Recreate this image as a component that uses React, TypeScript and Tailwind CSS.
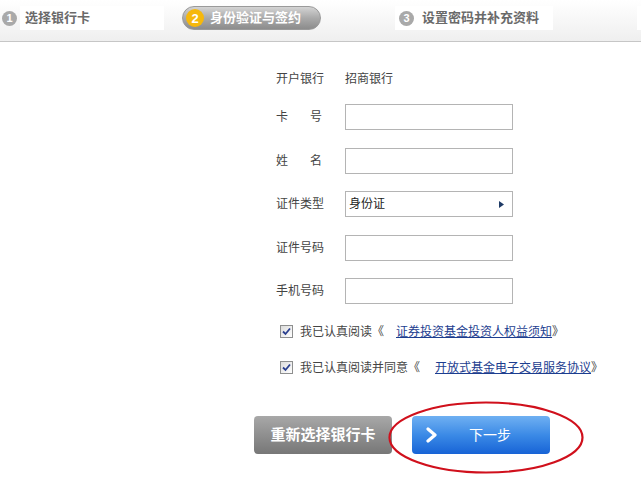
import React from 'react';

const font = { fontFamily: '"Liberation Sans", "Noto Sans CJK SC", sans-serif' };

function Step({ n, label, active }: { n: number; label: string; active?: boolean }) {
  if (active) {
    return (
      <div className="flex h-[24px] w-[139px] items-center rounded-full border border-[#9a9a9a] bg-gradient-to-b from-[#d4d4d4] via-[#aaaaaa] to-[#8c8c8c] pl-[3px]">
        <span className="flex h-[18px] w-[18px] items-center justify-center rounded-full bg-[#f6b80c] text-[13px] font-bold leading-none text-white">
          {n}
        </span>
        <span className="ml-[6px] text-[13px] font-bold text-white">{label}</span>
      </div>
    );
  }
  return (
    <div className="flex h-[24px] items-center bg-white pr-[14px]">
      <span className="flex h-[15px] w-[15px] items-center justify-center rounded-full bg-[#a9a9a9] text-[11px] font-bold leading-none text-white">
        {n}
      </span>
      <span className="ml-[8px] text-[13px] font-bold text-[#6a6a6a]">{label}</span>
    </div>
  );
}

function Row({ label, children, spaced }: { label: string; children: React.ReactNode; spaced?: boolean }) {
  return (
    <div className="flex h-[26px] items-center">
      {spaced ? (
        <div className="mr-[23px] flex w-[46px] justify-between text-[12px] text-[#444]">
          {label.split('').map((c, i) => (
            <span key={i}>{c}</span>
          ))}
        </div>
      ) : (
        <div className="w-[69px] text-[12px] text-[#444]">{label}</div>
      )}
      {children}
    </div>
  );
}

function Field() {
  return <input className="h-[26px] w-[168px] border border-[#b4b4b4] bg-white outline-none" />;
}

function Check() {
  return (
    <span className="flex h-[13px] w-[13px] items-center justify-center border border-[#8e8f8f] bg-gradient-to-br from-[#dcdcdc] to-white">
      <svg width="9" height="9" viewBox="0 0 9 9">
        <path d="M1 4.5 L3.5 7 L8 1.5" fill="none" stroke="#2a3f8f" strokeWidth="1.8" />
      </svg>
    </span>
  );
}

export default function App() {
  return (
    <div className="relative h-[477px] w-[641px] overflow-hidden bg-white" style={font}>
      <header className="flex h-[42px] items-start border-b border-[#c6c6c6] bg-gradient-to-b from-white to-[#efefef] pt-[6px]">
        <div className="ml-[2px] w-[162px]">
          <div className="flex h-[24px] items-center">
            <span className="flex h-[15px] w-[15px] items-center justify-center rounded-full bg-[#a9a9a9] text-[11px] font-bold leading-none text-white">
              1
            </span>
            <div className="ml-[3px] flex h-[24px] flex-1 items-center bg-white pl-[5px]">
              <span className="text-[13px] font-bold text-[#6a6a6a]">选择银行卡</span>
            </div>
          </div>
        </div>
        <div className="ml-[18px]">
          <Step n={2} label="身份验证与签约" active />
        </div>
        <div className="ml-[74px] bg-white pl-[4px]">
          <Step n={3} label="设置密码并补充资料" />
        </div>
        <div className="ml-auto h-[24px] w-[4px] bg-white" />
      </header>

      <div className="ml-[276px] flex flex-col">
        <div className="mt-[24px]">
          <Row label="开户银行">
            <span className="text-[12px] text-[#444]">招商银行</span>
          </Row>
        </div>
        <div className="mt-[12px] flex flex-col gap-[17.5px]">
          <Row label="卡号" spaced>
            <Field />
          </Row>
          <Row label="姓名" spaced>
            <Field />
          </Row>
          <Row label="证件类型">
            <div className="flex h-[26px] w-[168px] items-center justify-between border border-[#b4b4b4] bg-white pl-[3px] pr-[8px] text-[12px] text-[#222]">
              <span>身份证</span>
              <svg width="5" height="7" viewBox="0 0 5 7">
                <path d="M0 0 L5 3.5 L0 7 Z" fill="#1f3b66" />
              </svg>
            </div>
          </Row>
          <Row label="证件号码">
            <Field />
          </Row>
          <Row label="手机号码">
            <Field />
          </Row>
        </div>

        <div className="ml-[4px] mt-[21px] flex flex-col gap-[23px] text-[12px] text-[#444]">
          <label className="flex h-[13px] items-center">
            <Check />
            <span className="ml-[7px]">我已认真阅读《</span>
            <a className="ml-[12px] text-[#1c3d8f] underline">证券投资基金投资人权益须知</a>
            <span>》</span>
          </label>
          <label className="flex h-[13px] items-center">
            <Check />
            <span className="ml-[7px]">我已认真阅读并同意《</span>
            <a className="ml-[15px] text-[#1c3d8f] underline">开放式基金电子交易服务协议</a>
            <span>》</span>
          </label>
        </div>
      </div>

      <div className="ml-[254px] mt-[42px] flex gap-[20px]">
        <button className="flex h-[38px] w-[138px] items-center justify-center rounded-[4px] bg-gradient-to-b from-[#a8a8a8] to-[#777] text-[15px] font-bold text-white">
          重新选择银行卡
        </button>
        <button className="relative flex h-[38px] w-[138px] items-center rounded-[4px] bg-gradient-to-b from-[#6fb0f2] via-[#3b8ae6] to-[#1763d6] text-white">
          <svg className="ml-[14px]" width="12" height="16" viewBox="0 0 12 16">
            <path d="M2 2 L9 8 L2 14" fill="none" stroke="white" strokeWidth="3.2" strokeLinecap="round" strokeLinejoin="round" />
          </svg>
          <span className="ml-[31px] text-[14px]">下一步</span>
        </button>
      </div>

      <svg className="absolute left-[388px] top-[401px]" width="196" height="73" viewBox="0 0 196 73">
        <ellipse cx="98" cy="36.5" rx="96.5" ry="35" fill="none" stroke="#d0101c" strokeWidth="2.2" />
      </svg>
    </div>
  );
}
